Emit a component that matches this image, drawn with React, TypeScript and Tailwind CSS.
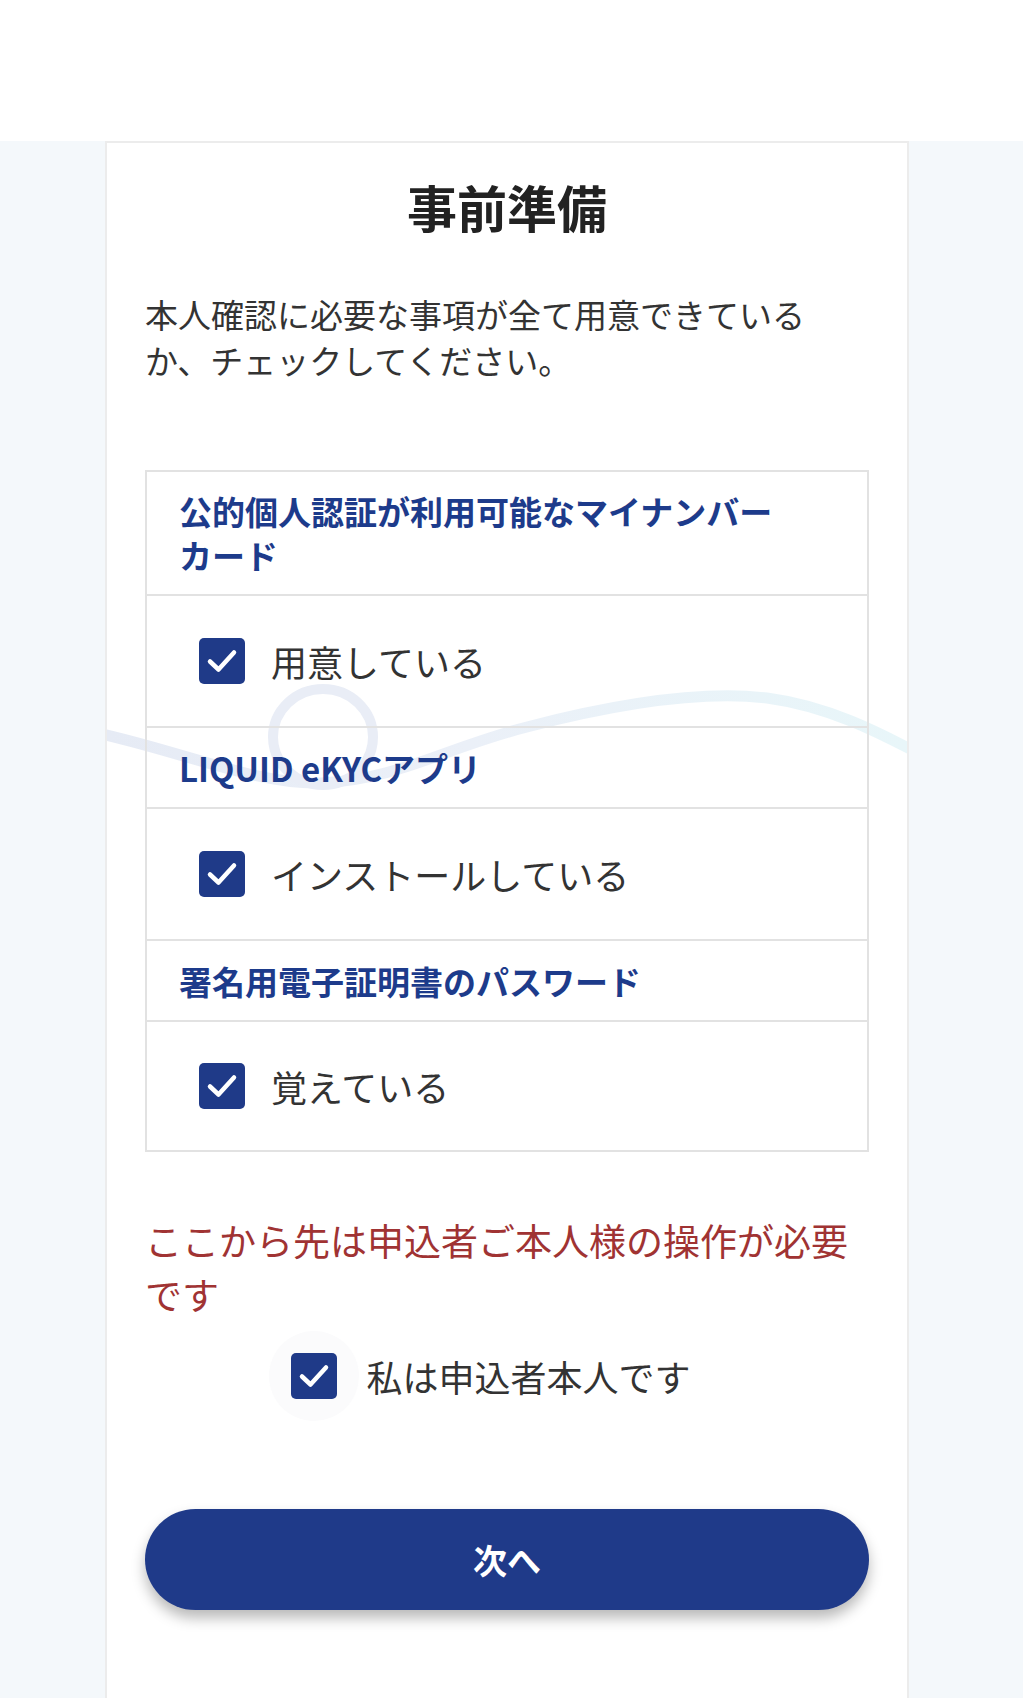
import React from "react";

const CheckBox = () => (
  <div className="w-[46px] h-[46px] shrink-0 rounded-[5px] bg-[#1f3a88] flex items-center justify-center">
    <svg width="46" height="46" viewBox="0 0 46 46" fill="none">
      <path d="M11 23.5 L19.5 31.5 L35 14.5" stroke="white" strokeWidth="4.5" strokeLinecap="round" strokeLinejoin="round" />
    </svg>
  </div>
);

const items = [
  { head: "公的個人認証が利用可能なマイナンバーカード", label: "用意している", tall: true },
  { head: "LIQUID eKYCアプリ", label: "インストールしている", tall: false },
  { head: "署名用電子証明書のパスワード", label: "覚えている", tall: false },
];

const App = () => {
  return (
    <div className="h-[1698px] overflow-hidden bg-[#f4f8fb] font-['Noto_Sans_CJK_JP','Noto_Sans',sans-serif]">
      <div className="h-[141px] bg-white" />
      <div className="relative ml-[105px] w-[804px] min-h-[1557px] bg-white border-x-2 border-t-2 border-[#ececec] px-[38px] pt-[33px]">
        {/* wave decoration */}
        <svg className="absolute left-0 top-0 pointer-events-none" width="800" height="800" viewBox="0 0 800 800" fill="none">
          <defs>
            <linearGradient id="wave" x1="0" y1="0" x2="800" y2="0" gradientUnits="userSpaceOnUse">
              <stop offset="0" stopColor="#e6ebf5" />
              <stop offset="0.45" stopColor="#ebf0f8" />
              <stop offset="1" stopColor="#e8f6f9" />
            </linearGradient>
          </defs>
          <path
            d="M-10 590 C 70 607 150 642 214 640 C 290 637 340 604 420 584 C 520 558 600 548 660 555 C 720 563 770 588 820 615"
            stroke="url(#wave)"
            strokeWidth="11"
            strokeLinecap="round"
          />
          <ellipse cx="216" cy="594" rx="50" ry="48" stroke="#e9edf6" strokeWidth="10" />
        </svg>

        <div className="relative">
          <h1 className="text-center text-[50px] leading-[60px] font-bold text-[#222]">事前準備</h1>
          <p className="mt-[55px] text-[33px] leading-[46px] text-[#333]">
            本人確認に必要な事項が全て用意できているか、チェックしてください。
          </p>

          <div className="mt-[87px] border-2 border-[#e2e2e2]">
            {items.map((it, i) => (
              <div key={i}>
                <div
                  className={
                    (i > 0 ? "border-t-2 border-[#e2e2e2] " : "") +
                    (it.tall
                      ? "py-[17px] pl-[32px] pr-[80px] "
                      : "h-[81px] flex items-center px-[32px] ") +
                    "text-[33px] leading-[44px] font-bold text-[#1d3b8b]"
                  }
                >
                  {it.head}
                </div>
                <div
                  className={
                    "border-t-2 border-[#e2e2e2] flex items-center gap-[26px] pl-[52px] " +
                    (i === 2 ? "h-[130px]" : "h-[132px]")
                  }
                >
                  <CheckBox />
                  <span className="text-[36px] leading-none text-[#333]">{it.label}</span>
                </div>
              </div>
            ))}
          </div>

          <p className="mt-[61px] text-[37px] leading-[54px] text-[#a03333]">
            ここから先は申込者ご本人様の操作が必要です
          </p>

          <div className="mt-[32px] flex justify-center pr-[32px]">
            <div className="flex items-center gap-[29px]">
              <div className="relative">
                <div className="absolute -inset-[22px] rounded-full bg-[#fbfbfc]" />
                <div className="relative">
                  <CheckBox />
                </div>
              </div>
              <span className="text-[36px] leading-none text-[#333]">私は申込者本人です</span>
            </div>
          </div>

          <button className="mt-[110px] w-full h-[101px] rounded-full bg-[#1f3a89] text-white text-[34px] font-bold shadow-[0_8px_14px_rgba(0,0,0,0.28)]">
            次へ
          </button>
        </div>
      </div>
    </div>
  );
};

export default App;
